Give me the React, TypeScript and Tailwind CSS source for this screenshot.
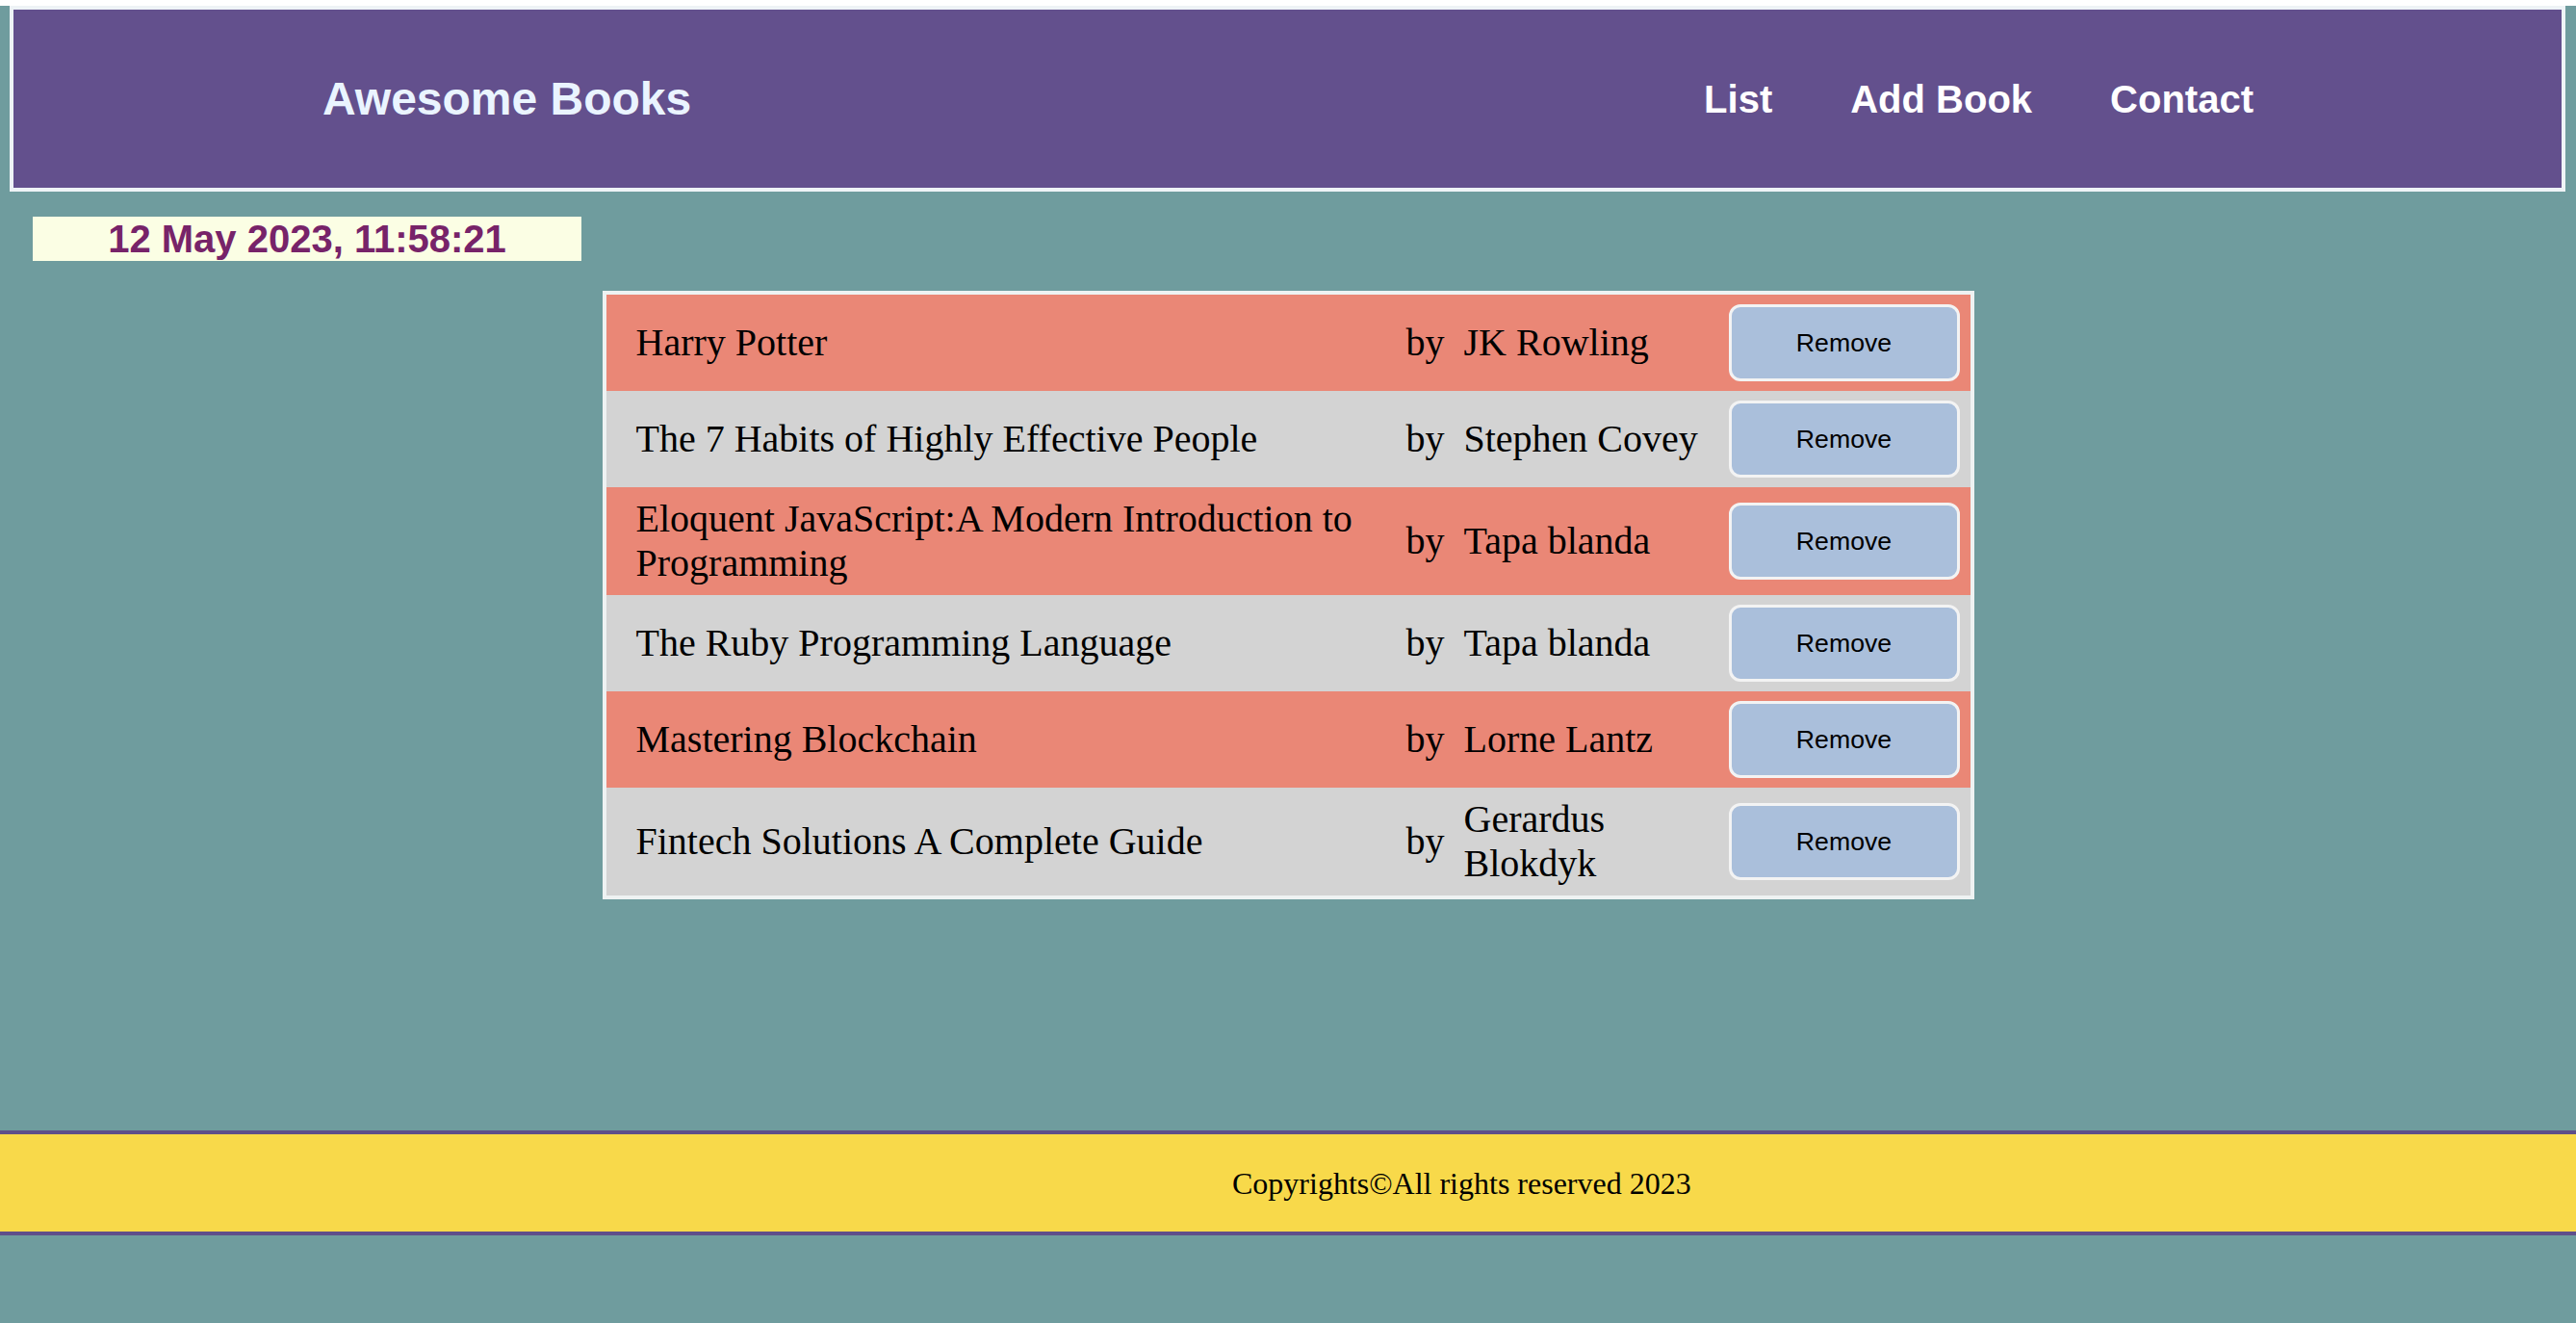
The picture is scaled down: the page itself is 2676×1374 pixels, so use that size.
const books = [
  { title: "Harry Potter", author: "JK Rowling" },
  { title: "The 7 Habits of Highly Effective People", author: "Stephen Covey" },
  { title: "Eloquent JavaScript:A Modern Introduction to Programming", author: "Tapa blanda" },
  { title: "The Ruby Programming Language", author: "Tapa blanda" },
  { title: "Mastering Blockchain", author: "Lorne Lantz" },
  { title: "Fintech Solutions A Complete Guide", author: "Gerardus Blokdyk" },
];

function Header() {
  return (
    <header className="ml-[10px] mr-[11px] mt-[6px] flex h-[193px] items-center justify-between border-4 border-[#eef3f6] bg-[#63508d] pl-[321px] pr-[320px] font-['Liberation_Sans',Arial,sans-serif]">
      <h1 className="text-[48px] font-bold text-[#eaf4ff]">Awesome Books</h1>
      <nav>
        <ul className="flex gap-[81px] text-[40px] font-bold text-white">
          <li>List</li>
          <li>Add Book</li>
          <li>Contact</li>
        </ul>
      </nav>
    </header>
  );
}

function BookRow({ title, author, index }: { title: string; author: string; index: number }) {
  const bg = index % 2 === 0 ? "bg-[#ea8776]" : "bg-[#d3d3d3]";
  return (
    <div className={`flex items-center py-[10px] pl-[31px] pr-[11px] text-[40px] leading-[46px] text-black ${bg}`}>
      <p className="w-[800px] pr-[40px]">{title}</p>
      <p className="w-[60px]">by</p>
      <p className="w-[275px] pr-[6px]">{author}</p>
      <button className="h-[80px] w-[240px] rounded-[12px] border-[3px] border-[#f3f3f3] bg-[#aabfdb] font-['Liberation_Sans',Arial,sans-serif] text-[26.67px] leading-none text-black">
        Remove
      </button>
    </div>
  );
}

export default function App() {
  return (
    <div className="min-h-screen bg-[#6f9c9e]">
      <Header />

      <div className="ml-[34px] mt-[26px] w-[570px] bg-[#fbfee4] text-center font-['Liberation_Sans',Arial,sans-serif] text-[40px] font-bold leading-[46px] text-[#772369]">
        12 May 2023, 11:58:21
      </div>

      <section className="mx-auto mt-[31px] w-[1425px] border-4 border-[#eef2f2] font-['Liberation_Serif','Times_New_Roman',serif]">
        {books.map((book, i) => (
          <BookRow key={book.title} title={book.title} author={book.author} index={i} />
        ))}
      </section>

      <footer className="mt-[240px] flex h-[109px] items-center border-y-4 border-[#5f4f8a] bg-[#f8d94a] pl-[1280px] font-['Liberation_Serif','Times_New_Roman',serif] text-[32px] text-black">
        Copyrights©All rights reserved 2023
      </footer>
    </div>
  );
}
